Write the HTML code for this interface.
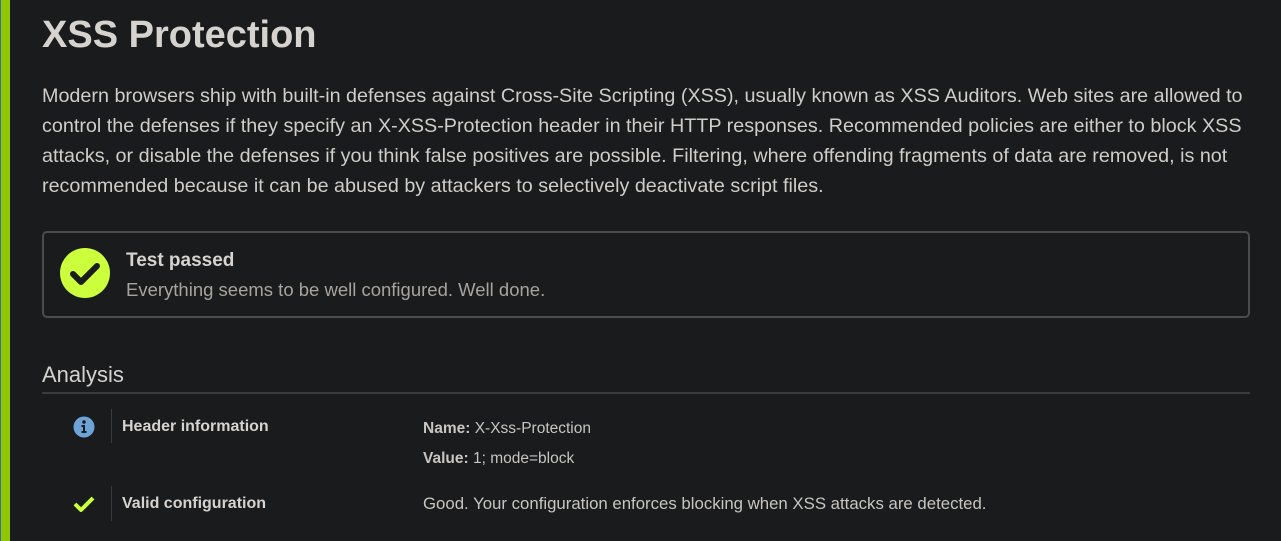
<!DOCTYPE html>
<html><head><meta charset="utf-8"><style>
body{margin:0;width:1281px;height:541px;background:#1a1b1d;font-family:"Liberation Sans",sans-serif;color:#d6d3cf;overflow:hidden;position:relative}
.bar{position:absolute;left:0;top:0;width:10px;height:541px;background:#8fc800;border-left:1px solid #3b6ea8;box-sizing:border-box}
h1{position:absolute;left:42px;top:14px;margin:0;font-size:38px;font-weight:bold;color:#d6d3cf}
p{position:absolute;left:42px;top:81px;width:1216px;margin:0;font-size:19.75px;line-height:30px;color:#d0cdc8}
.box{position:absolute;left:42px;top:231px;width:1208px;height:87px;box-sizing:border-box;border:2px solid #4a4c50;border-radius:5px}
.box b{position:absolute;left:82px;top:17px;font-size:19px}
.box span{position:absolute;left:82px;top:46px;font-size:18.5px;color:#a8a39c}
h2{position:absolute;left:42px;top:362px;margin:0;font-size:22px;font-weight:normal;color:#d6d3cf}
.hr{position:absolute;left:42px;top:392px;width:1208px;height:2px;background:#3a3c40}
.vl{position:absolute;left:111px;width:1px;background:#3a3c40}
.lbl{position:absolute;left:122px;font-size:16px;font-weight:bold}
.val{position:absolute;left:423px;font-size:15.5px;color:#c8c5c0}
</style></head><body>
<div class="bar"></div>
<h1>XSS Protection</h1>
<p>Modern browsers ship with built-in defenses against Cross-Site Scripting (XSS), usually known as XSS Auditors. Web sites are allowed to control the defenses if they specify an X-XSS-Protection header in their HTTP responses. Recommended policies are either to block XSS attacks, or disable the defenses if you think false positives are possible. Filtering, where offending fragments of data are removed, is not recommended because it can be abused by attackers to selectively deactivate script files.</p>
<div class="box">
<svg style="position:absolute;left:15px;top:14px" width="52" height="52" viewBox="0 0 52 52"><circle cx="26" cy="26" r="25" fill="#ccff3c"/><path d="M14 27l8 8 16-16" stroke="#1a1b1d" stroke-width="6" fill="none" stroke-linecap="round" stroke-linejoin="round"/></svg>
<b>Test passed</b><span>Everything seems to be well configured. Well done.</span></div>
<h2>Analysis</h2><div class="hr"></div>
<svg style="position:absolute;left:73px;top:416px" width="22" height="22" viewBox="0 0 22 22"><circle cx="11" cy="11" r="10.5" fill="#6ea3d8"/><circle cx="11" cy="6" r="1.8" fill="#1a1b1d"/><path d="M8.5 9h3.5v6h1.5v2h-5v-2h1.5v-4h-1.5z" fill="#1a1b1d"/></svg>
<div class="vl" style="top:409px;height:34px"></div>
<div class="lbl" style="top:418px">Header information</div>
<div class="val" style="top:420px"><b>Name:</b> X-Xss-Protection</div>
<div class="val" style="top:450px"><b>Value:</b> 1; mode=block</div>
<svg style="position:absolute;left:73px;top:494px" width="22" height="20" viewBox="0 0 22 20"><path d="M2 10l6 6 12-12" stroke="#ccff3c" stroke-width="4" fill="none" stroke-linejoin="round"/></svg>
<div class="vl" style="top:486px;height:35px"></div>
<div class="lbl" style="top:495px">Valid configuration</div>
<div class="val" style="top:494px;font-size:16.8px">Good. Your configuration enforces blocking when XSS attacks are detected.</div>
</body></html>
